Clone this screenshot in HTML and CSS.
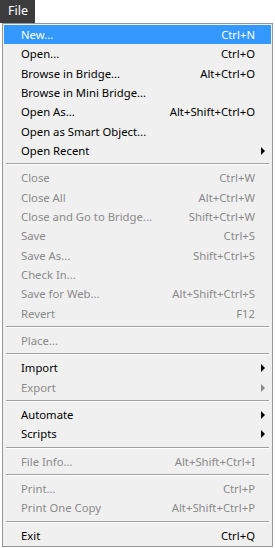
FILE: index.html
```html
<!DOCTYPE html>
<html lang="en">
<head>
  <meta charset="UTF-8">
  <meta name="viewport" content="width=device-width, initial-scale=1.0">
  <title>File Menu</title>
  <link rel="stylesheet" href="styles.css">
</head>
<body>
  <div class="menubar">
    <span class="menu-title">File</span>
  </div>

  <ul class="menu">
    <li class="item active"><span>New...</span><span class="key">Ctrl+N</span></li>
    <li class="item"><span>Open...</span><span class="key">Ctrl+O</span></li>
    <li class="item"><span>Browse in Bridge...</span><span class="key">Alt+Ctrl+O</span></li>
    <li class="item"><span>Browse in Mini Bridge...</span></li>
    <li class="item"><span>Open As...</span><span class="key">Alt+Shift+Ctrl+O</span></li>
    <li class="item"><span>Open as Smart Object...</span></li>
    <li class="item sub"><span>Open Recent</span></li>
    <li class="sep"></li>
    <li class="item off"><span>Close</span><span class="key">Ctrl+W</span></li>
    <li class="item off"><span>Close All</span><span class="key">Alt+Ctrl+W</span></li>
    <li class="item off"><span>Close and Go to Bridge...</span><span class="key">Shift+Ctrl+W</span></li>
    <li class="item off"><span>Save</span><span class="key">Ctrl+S</span></li>
    <li class="item off"><span>Save As...</span><span class="key">Shift+Ctrl+S</span></li>
    <li class="item off"><span>Check In...</span></li>
    <li class="item off"><span>Save for Web...</span><span class="key">Alt+Shift+Ctrl+S</span></li>
    <li class="item off"><span>Revert</span><span class="key">F12</span></li>
    <li class="sep"></li>
    <li class="item off"><span>Place...</span></li>
    <li class="sep"></li>
    <li class="item sub"><span>Import</span></li>
    <li class="item off sub"><span>Export</span></li>
    <li class="sep"></li>
    <li class="item sub"><span>Automate</span></li>
    <li class="item sub"><span>Scripts</span></li>
    <li class="sep"></li>
    <li class="item off"><span>File Info...</span><span class="key">Alt+Shift+Ctrl+I</span></li>
    <li class="sep"></li>
    <li class="item off"><span>Print...</span><span class="key">Ctrl+P</span></li>
    <li class="item off"><span>Print One Copy</span><span class="key">Alt+Shift+Ctrl+P</span></li>
    <li class="sep"></li>
    <li class="item"><span>Exit</span><span class="key">Ctrl+Q</span></li>
  </ul>
</body>
</html>
```

FILE: styles.css
```css
body {
  margin: 0;
  background: #fff;
  font-family: "Noto Sans", "Open Sans", sans-serif;
  font-size: 11.3px;
}
.menubar {
  height: 23px;
}
.menu-title {
  display: inline-block;
  height: 23px;
  line-height: 22px;
  padding: 0 7px 0 8px;
  background: #3c3c3c;
  color: #fff;
  font-size: 12.5px;
}
.menu {
  list-style: none;
  margin: 0 2px 0 2px;
  padding: 1px 1px 1px 1px;
  background: #f0f0f0;
  border: 1px solid #979797;
}
.item {
  display: flex;
  justify-content: space-between;
  align-items: center;
  height: 19.33px;
  padding: 0 16px 0 17px;
  color: #000;
  position: relative;
}
.item.off {
  color: #8a8a8a;
}
.item.active {
  background: #3399ff;
  color: #fff;
}
.item.sub::after {
  content: "";
  position: absolute;
  right: 6px;
  top: 6px;
  border-left: 4px solid #000;
  border-top: 4px solid transparent;
  border-bottom: 4px solid transparent;
}
.item.off.sub::after {
  border-left-color: #8a8a8a;
}
.sep {
  height: 1px;
  margin: 3px 2px 3px 2px;
  border-top: 1px solid #a0a0a0;
  background: #fff;
}
```
